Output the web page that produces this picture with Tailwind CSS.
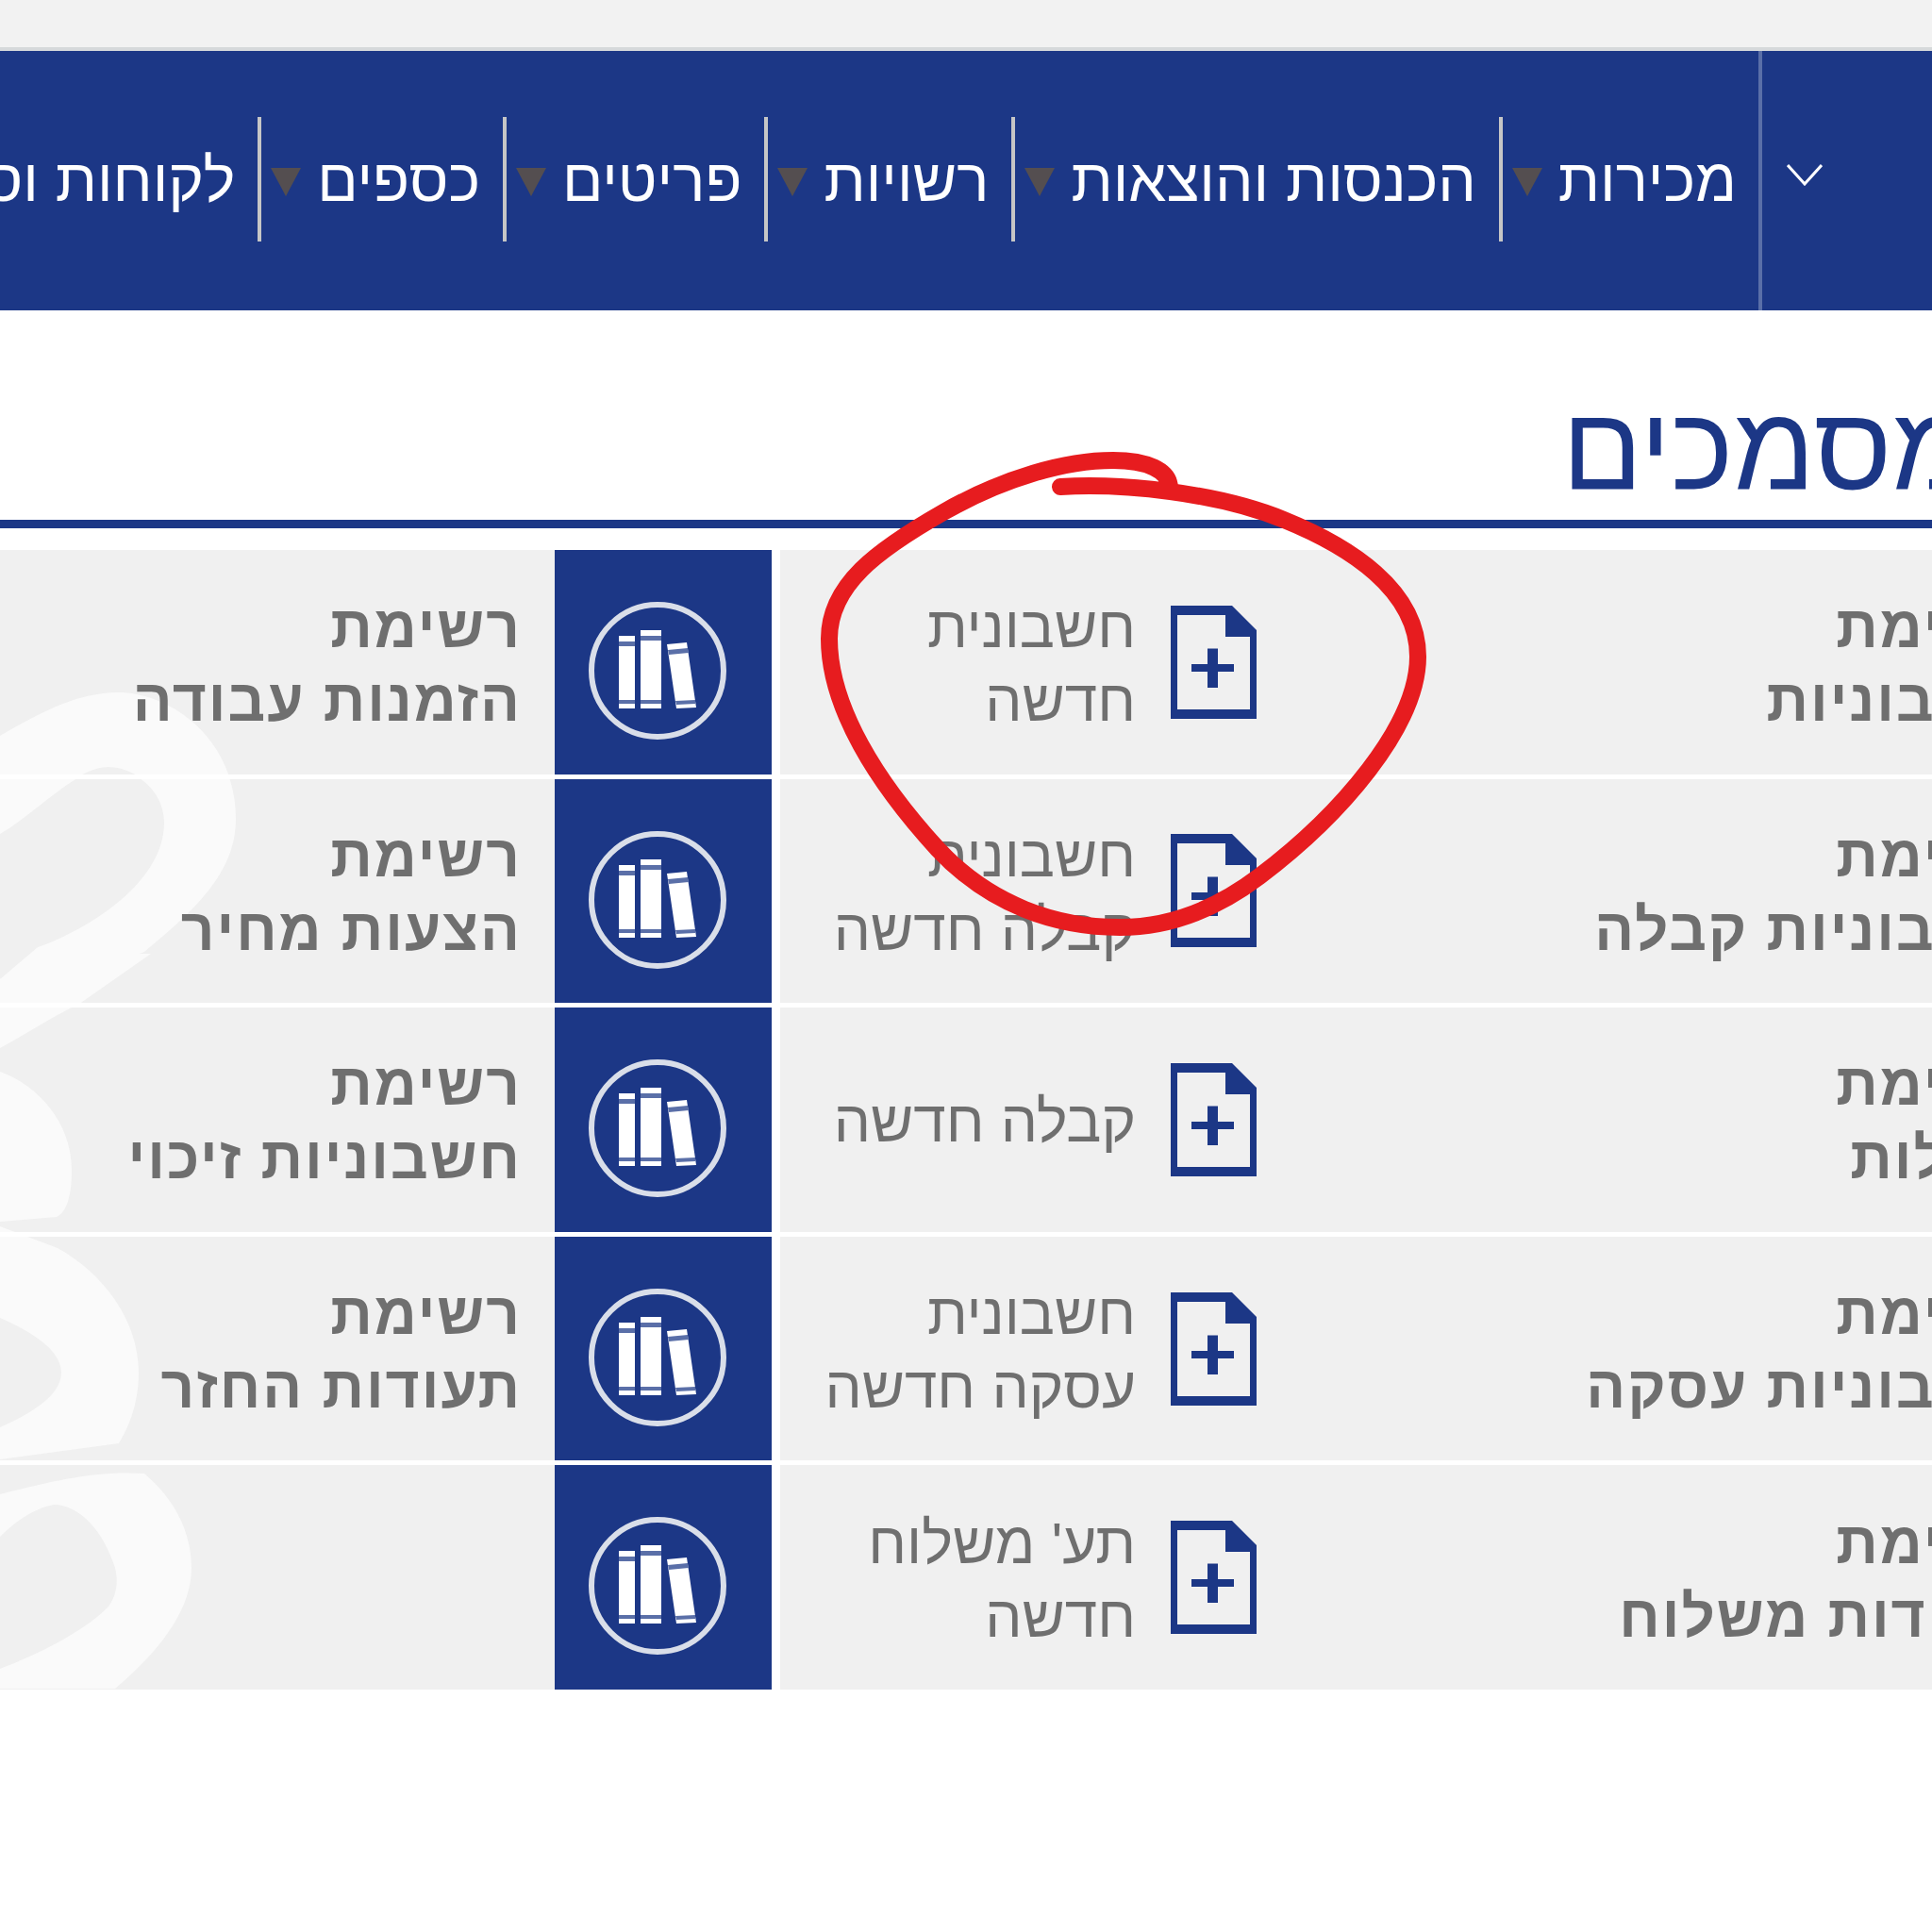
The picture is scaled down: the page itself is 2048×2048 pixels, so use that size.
<!DOCTYPE html>
<html lang="he">
  <head>
    <meta charset="UTF-8" />
    <title>מסמכים</title>
    <script src="https://cdn.jsdelivr.net/npm/@tailwindcss/browser@4"></script>
  </head>
  <body class="bg-white">
    <svg class="hidden">
      <defs>
        <symbol id="books" viewBox="0 0 146 146">
          <ellipse cx="73" cy="73" rx="70" ry="70" fill="none" stroke="#d9dee9" stroke-width="6" />
          <path fill="#fff" d="M32 36h17v77H32zM55 30h22v83H55zM83 45l21-2 10 69-21 1z" />
          <path fill="#5a6fa8" d="M32 42h17v5H32zM55 36h22v5H55zM84 51l21-2 1 5-21 2zM32 104h17v4H32zM55 104h22v4H55zM92 105l21-1 0 4-20 1z" />
        </symbol>
        <symbol id="doc" viewBox="0 0 91 120" preserveAspectRatio="none">
          <path fill="#1c3786" fill-rule="evenodd" d="M0 0H65L91 26V120H0ZM7 10V110H84V33H58V10Z" />
          <path fill="#1c3786" d="M22 62H39V45.500H50V62H67V70H50V87H39V70H22Z" />
        </symbol>
        <symbol id="mark" viewBox="0 0 588 2048" preserveAspectRatio="none">
          <path fill="#fafafa" fill-rule="evenodd" d="M0 780C60 745 90 734 130 734C190 738 250 790 250 867C250 925 205 965 153 1008L0 1066V1037L40 1003C80 990 174 940 174 871C174 835 140 813 115 813C80 813 40 860 0 883Z" />
          <path fill="#fafafa" d="M0 1111C30 1095 55 1078 80 1066L160 1010L40 1010L0 1037ZM0 1136C40 1150 76 1190 76 1240C76 1270 70 1285 60 1290L0 1295Z" />
          <path fill="#fafafa" fill-rule="evenodd" d="M0 1300L61 1323C110 1350 147 1400 147 1455C147 1490 135 1515 126 1530L0 1547V1513C30 1500 65 1480 65 1455C65 1430 30 1410 0 1397Z" />
          <path fill="#fafafa" fill-rule="evenodd" d="M0 1585C60 1570 100 1560 153 1563C185 1590 203 1625 203 1663C203 1710 165 1755 122 1791H0V1770C40 1755 90 1730 115 1704C125 1690 125 1675 122 1663C110 1625 85 1596 57 1596C35 1600 15 1615 0 1630Z" />
        </symbol>
      </defs>
    </svg>

    <div class="relative w-[2048px] h-[2048px] overflow-hidden" style="font-family: 'Liberation Sans', 'DejaVu Sans', sans-serif">
      <!-- top strip -->
      <div class="h-[54px] bg-[#f2f2f2] border-b-4 border-[#d6d9db]"></div>

      <!-- menu -->
      <nav dir="rtl" class="h-[275px] w-[2048px] bg-[#1c3786] flex items-stretch">
        <div class="w-[184px] shrink-0 flex items-center justify-end pl-[26px] pb-[13px] border-l-4 border-[#5a6fa8]">
          <svg width="38" height="24" viewBox="0 0 38 24" fill="none" stroke="#fff" stroke-width="3"><path d="M1 2L19 22L37 2" /></svg>
        </div>
        <div class="flex items-start pt-[70px] text-white text-[64px] leading-[62px] whitespace-nowrap">
          <div class="flex items-start h-[132px]">
            <span class="mr-[23px] mt-[36px]">מכירות</span>
            <i class="mr-[17px] mt-[54px] w-0 h-0 border-x-[16px] border-x-transparent border-t-[30px] border-t-[#544e50]"></i>
            <i class="mr-[10px] w-[4px] h-[132px] bg-[#c6c6c6]"></i>
          </div>
          <div class="flex items-start h-[132px]">
            <span class="mr-[24px] mt-[36px]">הכנסות והוצאות</span>
            <i class="mr-[17px] mt-[54px] w-0 h-0 border-x-[16px] border-x-transparent border-t-[30px] border-t-[#544e50]"></i>
            <i class="mr-[10px] w-[4px] h-[132px] bg-[#c6c6c6]"></i>
          </div>
          <div class="flex items-start h-[132px]">
            <span class="mr-[24px] mt-[36px]">רשויות</span>
            <i class="mr-[17px] mt-[54px] w-0 h-0 border-x-[16px] border-x-transparent border-t-[30px] border-t-[#544e50]"></i>
            <i class="mr-[10px] w-[4px] h-[132px] bg-[#c6c6c6]"></i>
          </div>
          <div class="flex items-start h-[132px]">
            <span class="mr-[24px] mt-[36px]">פריטים</span>
            <i class="mr-[17px] mt-[54px] w-0 h-0 border-x-[16px] border-x-transparent border-t-[30px] border-t-[#544e50]"></i>
            <i class="mr-[10px] w-[4px] h-[132px] bg-[#c6c6c6]"></i>
          </div>
          <div class="flex items-start h-[132px]">
            <span class="mr-[24px] mt-[36px]">כספים</span>
            <i class="mr-[17px] mt-[54px] w-0 h-0 border-x-[16px] border-x-transparent border-t-[30px] border-t-[#544e50]"></i>
            <i class="mr-[10px] w-[4px] h-[132px] bg-[#c6c6c6]"></i>
          </div>
          <div class="flex items-start h-[132px]">
            <span class="mr-[24px] mt-[36px]">לקוחות וספקים</span>
          </div>
        </div>
      </nav>

      <!-- heading -->
      <div dir="rtl" class="h-[231px] w-[2048px] border-b-[9px] border-[#1c3786] flex items-end">
        <h1 class="-mr-[44px] text-[#1c3786] text-[126px] leading-[126px] pb-[13px] whitespace-nowrap">מסמכים</h1>
      </div>

      <!-- table -->
      <div class="mt-[23px] w-[2149px] grid grid-cols-[588px_230px_1331px] grid-rows-[repeat(5,237.6px)] gap-y-[5px] text-[#6f6f6f] text-[62px] leading-[78px]">
        <!-- row 1 -->
        <div dir="rtl" class="relative bg-[#f0f0f0] overflow-hidden pr-[35px] pt-[5px] flex flex-col justify-center font-bold tracking-[2px]">
          <svg class="absolute left-0 top-0 w-[588px] h-[238px]" viewBox="0 583 588 238"><use href="#mark" width="588" height="2048" /></svg>
          <span class="relative">רשימת</span><span class="relative">הזמנות עבודה</span>
        </div>
        <div class="bg-[#1c3786] pl-[36px] pt-[55px]"><svg width="146" height="146"><use href="#books" /></svg></div>
        <div class="ml-[9px] bg-[#f0f0f0] flex items-center">
          <div dir="rtl" class="w-[377px] shrink-0 pt-[5px]"><div>חשבונית</div><div>חדשה</div></div>
          <svg class="ml-[37px] shrink-0" width="91" height="120"><use href="#doc" /></svg>
          <div dir="rtl" class="ml-auto pt-[5px] font-bold tracking-[2px] whitespace-nowrap"><div>רשימת</div><div>חשבוניות</div></div>
        </div>
        <!-- row 2 -->
        <div dir="rtl" class="relative bg-[#f0f0f0] overflow-hidden pr-[35px] pt-[5px] flex flex-col justify-center font-bold tracking-[2px]">
          <svg class="absolute left-0 top-0 w-[588px] h-[238px]" viewBox="0 825 588 238"><use href="#mark" width="588" height="2048" /></svg>
          <span class="relative">רשימת</span><span class="relative">הצעות מחיר</span>
        </div>
        <div class="bg-[#1c3786] pl-[36px] pt-[55px]"><svg width="146" height="146"><use href="#books" /></svg></div>
        <div class="ml-[9px] bg-[#f0f0f0] flex items-center">
          <div dir="rtl" class="w-[377px] shrink-0 pt-[5px]"><div>חשבונית</div><div>קבלה חדשה</div></div>
          <svg class="ml-[37px] shrink-0" width="91" height="120"><use href="#doc" /></svg>
          <div dir="rtl" class="ml-auto pt-[5px] font-bold tracking-[2px] whitespace-nowrap"><div>רשימת</div><div>חשבוניות קבלה</div></div>
        </div>
        <!-- row 3 -->
        <div dir="rtl" class="relative bg-[#f0f0f0] overflow-hidden pr-[35px] pt-[5px] flex flex-col justify-center font-bold tracking-[2px]">
          <svg class="absolute left-0 top-0 w-[588px] h-[238px]" viewBox="0 1068 588 238"><use href="#mark" width="588" height="2048" /></svg>
          <span class="relative">רשימת</span><span class="relative">חשבוניות זיכוי</span>
        </div>
        <div class="bg-[#1c3786] pl-[36px] pt-[55px]"><svg width="146" height="146"><use href="#books" /></svg></div>
        <div class="ml-[9px] bg-[#f0f0f0] flex items-center">
          <div dir="rtl" class="w-[377px] shrink-0 pt-[5px]"><div>קבלה חדשה</div></div>
          <svg class="ml-[37px] shrink-0" width="91" height="120"><use href="#doc" /></svg>
          <div dir="rtl" class="ml-auto pt-[5px] font-bold tracking-[2px] whitespace-nowrap"><div>רשימת</div><div>קבלות</div></div>
        </div>
        <!-- row 4 -->
        <div dir="rtl" class="relative bg-[#f0f0f0] overflow-hidden pr-[35px] pt-[5px] flex flex-col justify-center font-bold tracking-[2px]">
          <svg class="absolute left-0 top-0 w-[588px] h-[238px]" viewBox="0 1311 588 238"><use href="#mark" width="588" height="2048" /></svg>
          <span class="relative">רשימת</span><span class="relative">תעודות החזר</span>
        </div>
        <div class="bg-[#1c3786] pl-[36px] pt-[55px]"><svg width="146" height="146"><use href="#books" /></svg></div>
        <div class="ml-[9px] bg-[#f0f0f0] flex items-center">
          <div dir="rtl" class="w-[377px] shrink-0 pt-[5px]"><div>חשבונית</div><div>עסקה חדשה</div></div>
          <svg class="ml-[37px] shrink-0" width="91" height="120"><use href="#doc" /></svg>
          <div dir="rtl" class="ml-auto pt-[5px] font-bold tracking-[2px] whitespace-nowrap"><div>רשימת</div><div>חשבוניות עסקה</div></div>
        </div>
        <!-- row 5 -->
        <div dir="rtl" class="relative bg-[#f0f0f0] overflow-hidden pr-[35px] flex flex-col justify-center font-bold">
          <svg class="absolute left-0 top-0 w-[588px] h-[238px]" viewBox="0 1554 588 238"><use href="#mark" width="588" height="2048" /></svg>
        </div>
        <div class="bg-[#1c3786] pl-[36px] pt-[55px]"><svg width="146" height="146"><use href="#books" /></svg></div>
        <div class="ml-[9px] bg-[#f0f0f0] flex items-center">
          <div dir="rtl" class="w-[377px] shrink-0 pt-[5px]"><div>תע' משלוח</div><div>חדשה</div></div>
          <svg class="ml-[37px] shrink-0" width="91" height="120"><use href="#doc" /></svg>
          <div dir="rtl" class="ml-auto pt-[5px] font-bold tracking-[2px] whitespace-nowrap"><div>רשימת</div><div>תעודות משלוח</div></div>
        </div>
      </div>

      <!-- red marker circle drawn over the page -->
      <svg class="absolute left-0 top-0" width="2048" height="2048" fill="none">
        <path stroke="#e71c1f" stroke-width="18" stroke-linecap="round" d="M1124 516C1190 512 1290 522 1361 551C1430 579 1503 625 1503 696C1503 770 1420 865 1335 929C1290 963 1240 983 1187 983C1120 983 1050 960 994 900C930 830 879 750 879 677C879 620 930 583 1000 543C1065 506 1130 488 1180 488C1215 488 1240 498 1240 518" />
      </svg>
    </div>
  </body>
</html>
